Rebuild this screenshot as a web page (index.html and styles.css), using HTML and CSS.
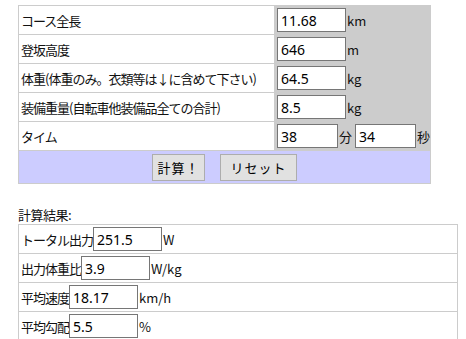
FILE: index.html
```html
<!DOCTYPE html>
<html lang="ja">
<head>
    <meta charset="UTF-8">
    <meta name="viewport" content="width=device-width, initial-scale=1.0">
    <title>パワー計算</title>
    <link rel="stylesheet" href="styles.css">
</head>
<body>
    <form id="PowerCalc">
        <table class="calc">
            <tr>
                <td class="label">コース全長</td>
                <td class="field"><input class="num" type="text" value="11.68"><span class="unit">km</span></td>
            </tr>
            <tr>
                <td class="label">登坂高度</td>
                <td class="field"><input class="num" type="text" value="646"><span class="unit">m</span></td>
            </tr>
            <tr>
                <td class="label">体重(体重のみ。衣類等は↓に含めて下さい)</td>
                <td class="field"><input class="num" type="text" value="64.5"><span class="unit">kg</span></td>
            </tr>
            <tr>
                <td class="label">装備重量(自転車他装備品全ての合計)</td>
                <td class="field"><input class="num" type="text" value="8.5"><span class="unit">kg</span></td>
            </tr>
            <tr>
                <td class="label">タイム</td>
                <td class="field"><input class="num short" type="text" value="38"><span class="unit sep">分</span><input class="num short" type="text" value="34"><span class="unit">秒</span></td>
            </tr>
            <tr>
                <td class="actions" colspan="2">
                    <button type="button" class="btn calc-btn">計算！</button>
                    <button type="reset" class="btn reset-btn">リセット</button>
                </td>
            </tr>
        </table>

        <p class="result-title">計算結果:</p>
        <table class="result">
            <tr><td><span class="label">トータル出力</span><input class="num" type="text" value="251.5"><span class="unit">W</span></td></tr>
            <tr><td><span class="label">出力体重比</span><input class="num" type="text" value="3.9"><span class="unit">W/kg</span></td></tr>
            <tr><td><span class="label">平均速度</span><input class="num" type="text" value="18.17"><span class="unit">km/h</span></td></tr>
            <tr><td><span class="label">平均勾配</span><input class="num" type="text" value="5.5"><span class="unit">%</span></td></tr>
        </table>
    </form>
</body>
</html>
```

FILE: styles.css
```css
* {
    padding: 0;
    margin: 0;
    box-sizing: border-box;
}
body {
    font-family: "Noto Sans CJK JP", "Noto Sans", sans-serif;
    font-size: 13px;
    color: #111;
    background: #fff;
}
#PowerCalc {
    padding: 5px 0 0 18px;
}
table.calc {
    width: 413px;
    background-color: #cccccc;
    border-spacing: 1px;
}
table.calc td {
    height: 28px;
    padding: 0;
    vertical-align: middle;
}
table.calc td.label {
    width: 255px;
    background-color: #fff;
    padding-left: 2px;
    letter-spacing: -1px;
    white-space: nowrap;
}
table.calc td.field {
    padding-left: 2px;
    white-space: nowrap;
}
table.calc td.actions {
    height: 32px;
    background-color: #ccccff;
    text-align: center;
}
.num {
    width: 69px;
    height: 24px;
    border: 1px solid #767676;
    padding: 0 3px;
    font-family: "Noto Sans", sans-serif;
    font-size: 14px;
    color: #000;
    vertical-align: middle;
    background: #fff;
}
.num.short {
    width: 61px;
}
.unit {
    vertical-align: middle;
    margin-left: 1px;
}
.unit.sep {
    margin-right: 3px;
}
.btn {
    height: 27px;
    padding: 0;
    border: 1px solid #adadad;
    background-color: #e1e1e1;
    font-family: "Noto Sans CJK JP", sans-serif;
    font-size: 13px;
    color: #000;
    margin: 0 6px;
}
.calc-btn {
    width: 53px;
    letter-spacing: 1px;
}
.reset-btn {
    width: 77px;
    letter-spacing: 1px;
}
.result-title {
    margin-top: 22px;
    line-height: 18px;
    letter-spacing: -0.5px;
}
table.result {
    width: 440px;
    border-collapse: collapse;
}
table.result td {
    height: 29px;
    border: 1px solid #cccccc;
    padding: 0 0 0 2px;
    white-space: nowrap;
}
table.result .label {
    letter-spacing: -1px;
    vertical-align: middle;
}
```
